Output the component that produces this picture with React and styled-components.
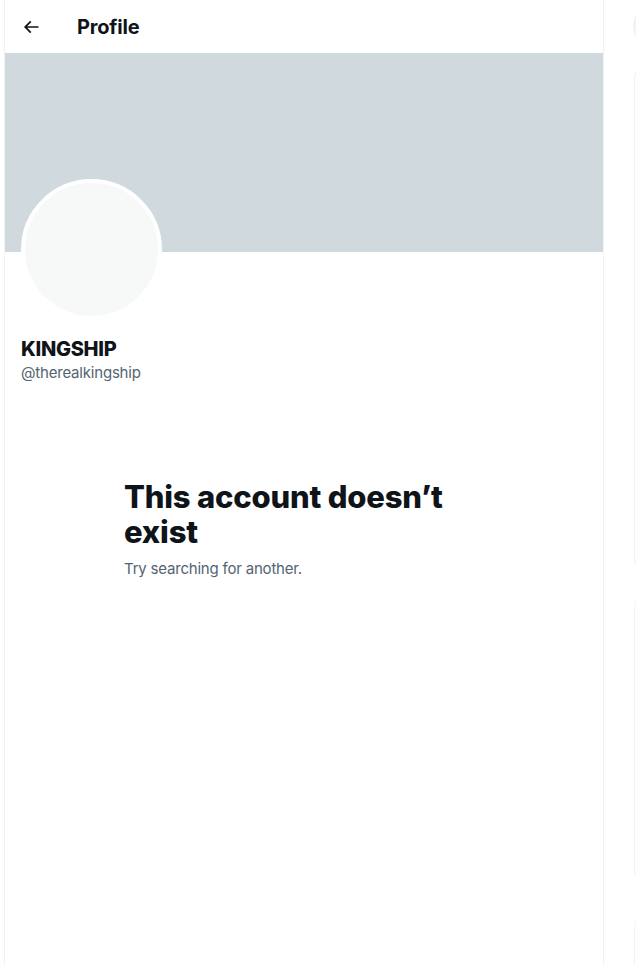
import React from 'react';
import styled, { createGlobalStyle } from 'styled-components';

const GlobalStyle = createGlobalStyle`
  html, body {
    margin: 0;
    padding: 0;
    background: #ffffff;
    overflow: hidden;
  }
  body {
    font-family: 'Inter', 'Noto Sans', 'Liberation Sans', sans-serif;
    color: #0f1419;
  }
`

const Page = styled.div`
  display: flex;
  flex-direction: row;
  align-items: flex-start;
  padding-left: 4px;
  width: 636px;
  height: 965px;
  box-sizing: border-box;
  overflow: hidden;
`

const Column = styled.main`
  width: 598px;
  flex-shrink: 0;
  height: 100%;
  border-left: 1px solid #eff3f4;
  border-right: 1px solid #eff3f4;
`

const Header = styled.div`
  display: flex;
  align-items: center;
  height: 53px;
  padding-left: 8px;
`

const BackButton = styled.button`
  width: 36px;
  height: 36px;
  border: 0;
  border-radius: 50%;
  background: transparent;
  display: flex;
  align-items: center;
  justify-content: center;
  padding: 0;
  cursor: pointer;
  color: #0f1419;
`

const Title = styled.h2`
  margin: 0 0 0 28px;
  font-size: 20px;
  line-height: 24px;
  font-weight: 700;
  letter-spacing: -0.2px;
`

const Banner = styled.div`
  height: 199px;
  background: #cfd9de;
`

const ProfileInfo = styled.div`
  padding: 0 16px;
`

const Avatar = styled.div`
  width: 141px;
  height: 141px;
  box-sizing: border-box;
  margin-top: -73px;
  border-radius: 50%;
  border: 4px solid #ffffff;
  background: #f7f9f9;
`

const Name = styled.div`
  margin-top: 17px;
  font-size: 20px;
  line-height: 24px;
  font-weight: 800;
  letter-spacing: -0.3px;
`

const Handle = styled.div`
  margin-top: 2px;
  font-size: 15px;
  line-height: 20px;
  letter-spacing: -0.2px;
  color: #536471;
`

const Empty = styled.div`
  width: 360px;
  margin: 96px auto 0;
`

const EmptyTitle = styled.h1`
  margin: 0;
  font-size: 31px;
  line-height: 35px;
  font-weight: 800;
  letter-spacing: -0.2px;
`

const EmptyText = styled.p`
  margin: 10px 0 0;
  font-size: 15px;
  line-height: 20px;
  letter-spacing: -0.2px;
  color: #536471;
`

const Sidebar = styled.aside`
  margin-left: 28px;
  width: 350px;
  flex-shrink: 0;
  display: flex;
  flex-direction: column;
  padding-top: 5px;
`

const Search = styled.div`
  height: 42px;
  margin-left: 1px;
  border-radius: 21px;
  background: #eff3f4;
`

const Card = styled.div`
  margin-left: 2px;
  margin-top: ${p => p.$gap}px;
  height: ${p => p.$h}px;
  border: 1px solid #eff3f4;
  border-radius: 16px;
`

const BackArrow = () => (
  <svg width="20" height="20" viewBox="0 0 24 24" fill="currentColor">
    <path d="M7.414 13l5.043 5.04-1.414 1.42L3.586 12l7.457-7.46 1.414 1.42L7.414 11H21v2H7.414z" />
  </svg>
)

const App = () => {
  return (
    <Page>
      <GlobalStyle />
      <Column>
        <Header>
          <BackButton aria-label="Back">
            <BackArrow />
          </BackButton>
          <Title>Profile</Title>
        </Header>
        <Banner />
        <ProfileInfo>
          <Avatar />
          <Name>KINGSHIP</Name>
          <Handle>@therealkingship</Handle>
        </ProfileInfo>
        <Empty>
          <EmptyTitle>This account doesn’t exist</EmptyTitle>
          <EmptyText>Try searching for another.</EmptyText>
        </Empty>
      </Column>
      <Sidebar>
        <Search />
        <Card $gap={15} $h={511} />
        <Card $gap={17} $h={292} />
        <Card $gap={26} $h={300} />
      </Sidebar>
    </Page>
  )
}

export default App
